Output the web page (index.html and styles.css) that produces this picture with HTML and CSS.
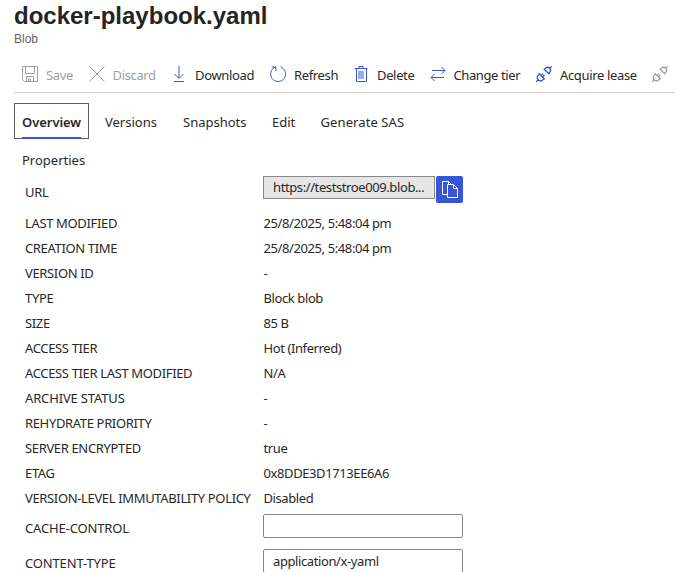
FILE: index.html
```html
<!DOCTYPE html>
<html lang="en">
<head>
<meta charset="utf-8">
<title>docker-playbook.yaml</title>
<link rel="stylesheet" href="styles.css">
</head>
<body>
<header class="heading">
  <h1>docker-playbook.yaml</h1>
  <p>Blob</p>
</header>
<div class="toolbar">
  <button class="command disabled save"><svg viewBox="0 0 16 16"><path d="M.5.5h15v15H2.500l-2-2zM3.500.5v7h9v-7M4.500 15.500v-5h7v5M6.500 15.500v-2.500h2v2.500"/></svg><span>Save</span></button>
  <button class="command disabled discard"><svg viewBox="0 0 16 16"><path d="M.5.5l15 15M15.500.5l-15 15"/></svg><span>Discard</span></button>
  <button class="command download"><svg viewBox="0 0 16 16"><path class="soft" d="M8 0v12"/><path d="M3.500 8L8 12.500 12.500 8M3 15.500h10"/></svg><span>Download</span></button>
  <button class="command refresh"><svg viewBox="0 0 16 16"><path d="M10.500.9A7.500 7.500 0 1 1 5.500 1M1.800 1h4v4"/></svg><span>Refresh</span></button>
  <button class="command delete"><svg viewBox="0 0 16 16"><path class="fill" d="M5 5h6v8H5z"/><path d="M1.500 2.500h13M6 2.500v-2h4v2M3.500 2.500v13h10v-13"/></svg><span>Delete</span></button>
  <button class="command tier"><svg viewBox="0 0 16 16"><path d="M2 4.500h13M11.500 1l3.500 3.500L11.500 8M14 11.500H1M4.500 8L1 11.500 4.500 15"/></svg><span>Change tier</span></button>
  <button class="command lease"><svg viewBox="0 0 16 16"><path d="M.3 15.700l2.200-2.200M2.700 7.300l6 6M3.400 8L2.300 9.100C1 10.400.9 12.200 2.300 13.700S5.600 15 6.900 13.700L8 12.600M5 9.600l2-2M6.400 11l2-2M7.700 2.700l5.600 5.600M8.400 3.400l1-1c1.300-1.300 2.900-1.400 4.200-.1s1.200 3 0 4.200l-1 1M13.500 2.500l2.200-2.200"/></svg><span>Acquire lease</span></button>
  <button class="command disabled lease" aria-label="Break lease"><svg viewBox="0 0 16 16"><path d="M.3 15.700l2.200-2.200M2.700 7.300l6 6M3.400 8L2.300 9.100C1 10.400.9 12.200 2.300 13.700S5.600 15 6.900 13.700L8 12.600M5 9.600l2-2M6.400 11l2-2M7.700 2.700l5.600 5.600M8.400 3.400l1-1c1.300-1.300 2.900-1.400 4.200-.1s1.200 3 0 4.200l-1 1M13.500 2.500l2.200-2.200"/></svg></button>
</div>
<nav class="tabs">
  <a class="tab active"><span>Overview</span></a>
  <a class="tab versions">Versions</a>
  <a class="tab snapshots">Snapshots</a>
  <a class="tab edit">Edit</a>
  <a class="tab sas">Generate SAS</a>
</nav>
<main>
  <h2>Properties</h2>
  <dl>
    <div class="row url"><dt>URL</dt><dd><span class="field locked">https://teststroe009.blob...</span><button class="copy" aria-label="Copy"><svg viewBox="0 0 16 17"><path d="M5 13.500H.5V.5h6l3 3M5.500 3.500h6l4 4v9h-10zM11.500 3.500v4h4M6.500.5v3"/></svg></button></dd></div>
    <div class="row"><dt>LAST MODIFIED</dt><dd>25/8/2025, 5:48:04 pm</dd></div>
    <div class="row"><dt>CREATION TIME</dt><dd>25/8/2025, 5:48:04 pm</dd></div>
    <div class="row"><dt>VERSION ID</dt><dd>-</dd></div>
    <div class="row"><dt>TYPE</dt><dd>Block blob</dd></div>
    <div class="row"><dt>SIZE</dt><dd>85 B</dd></div>
    <div class="row"><dt>ACCESS TIER</dt><dd>Hot (Inferred)</dd></div>
    <div class="row"><dt>ACCESS TIER LAST MODIFIED</dt><dd>N/A</dd></div>
    <div class="row"><dt class="wide">ARCHIVE STATUS</dt><dd>-</dd></div>
    <div class="row"><dt>REHYDRATE PRIORITY</dt><dd>-</dd></div>
    <div class="row"><dt>SERVER ENCRYPTED</dt><dd>true</dd></div>
    <div class="row"><dt>ETAG</dt><dd>0x8DDE3D1713EE6A6</dd></div>
    <div class="row"><dt>VERSION-LEVEL IMMUTABILITY POLICY</dt><dd>Disabled</dd></div>
    <div class="row input"><dt class="wide">CACHE-CONTROL</dt><dd><span class="field"></span></dd></div>
    <div class="row input"><dt class="wide">CONTENT-TYPE</dt><dd><span class="field">application/x-yaml</span></dd></div>
  </dl>
</main>
</body>
</html>
```

FILE: styles.css
```css
* { box-sizing: border-box; }
body {
  margin: 0;
  height: 572px;
  overflow: hidden;
  background: #fff;
  color: #292827;
  font: 13px/20px "Noto Sans", sans-serif;
}
h1, h2, p, dl, dt, dd { margin: 0; }
button {
  padding: 0;
  border: 0;
  background: none;
  color: inherit;
  font: inherit;
}
svg { display: block; fill: none; stroke: currentColor; stroke-width: 1; }

.heading { height: 57px; padding: 2px 0 0 14px; font-family: "Liberation Sans", sans-serif; }
.heading h1 { font-size: 24px; line-height: 28px; color: #242424; }
.heading p { font-size: 12px; line-height: 18px; color: #646464; }

.toolbar {
  display: flex;
  height: 36px;
  margin-left: 14px;
  padding-left: 8px;
  border-bottom: 1px solid #d0d0d0;
  overflow: hidden;
}
.command { display: flex; flex: none; align-items: flex-start; gap: 8px; height: 35px; padding-top: 9px; line-height: 18px; white-space: nowrap; letter-spacing: -.35px; }
.command svg { width: 16px; height: 16px; color: #3556d6; }
.command.disabled, .command.disabled svg { color: #a19f9d; }
.soft { stroke: #9cabeb; stroke-width: 2; }
.fill { fill: #9cabeb; stroke: none; }
.save { width: 67px; }
.discard { width: 82px; }
.discard span { margin-left: -.5px; }
.download { width: 99px; }
.refresh { width: 83px; }
.delete { width: 77px; }
.tier { width: 106px; letter-spacing: -.4px; }
.tier span { margin-left: -.5px; }
.lease { width: 116px; }
.lease svg { stroke-width: 1.3; }

.tabs { display: flex; height: 36px; margin: 10px 0 0 14px; line-height: 36px; }
.tab { flex: none; padding-top: 1px; white-space: nowrap; }
.tab.active { width: 75px; margin-right: 16px; padding: 0 7px; border: 1px solid #605e5c; font-weight: 600; letter-spacing: -.05px; }
.tab.active span { display: block; height: 35px; border-bottom: 2px solid #3556d6; }
.versions { width: 78px; }
.snapshots { width: 89px; }
.edit { width: 48px; }
.sas { padding-left: .5px; letter-spacing: .1px; }

main { padding: 11px 0 0 22px; }
h2 { font-size: 13px; font-weight: 400; line-height: 20px; }
dl { padding: 6px 0 0 3px; }
.row { display: grid; grid-template-columns: 238px 1fr; height: 25px; line-height: 25px; white-space: nowrap; }
dt { letter-spacing: -.35px; }
dt.wide { letter-spacing: -.15px; }
dd { letter-spacing: -.4px; }
.row dd { padding-left: .5px; }
.url { height: 35px; }
.url dt { line-height: 32px; }
.row.url dd, .row.input dd { display: flex; padding-left: 0; }
.field { display: block; width: 200px; height: 24px; padding: 0 9px; border: 1px solid #8a8886; border-radius: 2px; line-height: 22px; }
.field.locked { width: 172px; height: 23px; margin-right: 1px; border-radius: 0; background: #e6e6e6; line-height: 21px; }
.copy { width: 27px; height: 27px; padding: 5px 5px 5px 6px; border-radius: 2px; background: #3556d6; color: #fff; }
.copy svg { width: 16px; height: 17px; }
.input { height: 35px; line-height: 35px; }
.input dd { padding-top: 3px; }
```
